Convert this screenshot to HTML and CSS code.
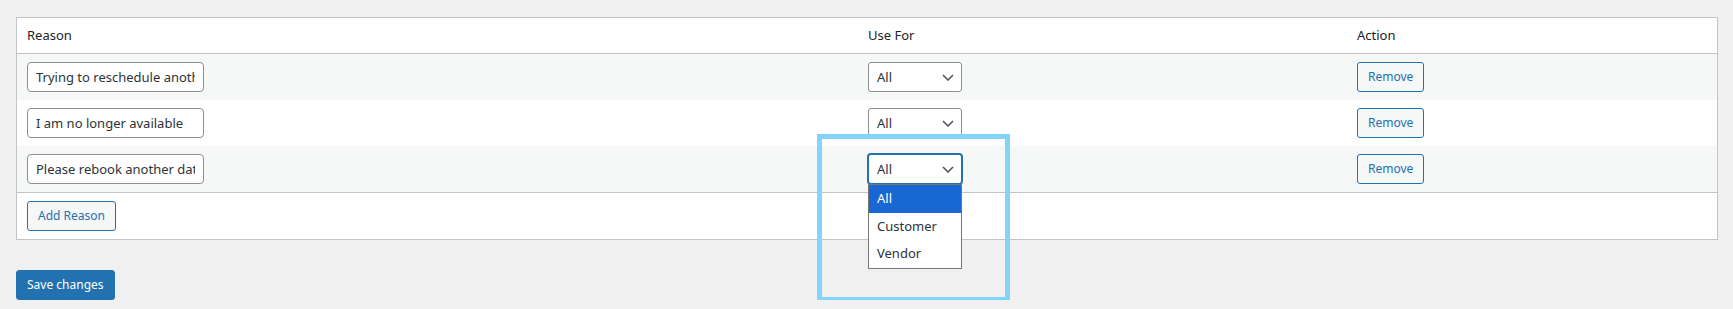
FILE: index.html
```html
<!DOCTYPE html>
<html lang="en">
<head>
    <meta charset="UTF-8">
    <meta name="viewport" content="width=device-width, initial-scale=1.0">
    <title>Cancellation Reasons</title>
    <link rel="stylesheet" href="styles.css">
</head>
<body>
    <table class="reasons-table">
        <colgroup>
            <col class="col-reason">
            <col class="col-use">
            <col>
        </colgroup>
        <thead>
            <tr>
                <th>Reason</th>
                <th>Use For</th>
                <th>Action</th>
            </tr>
        </thead>
        <tbody>
            <tr>
                <td><input type="text" class="reason-input" value="Trying to reschedule another time"></td>
                <td>
                    <div class="select-box">
                        <span>All</span>
                        <svg class="chevron" width="12" height="7" viewBox="0 0 12 7"><path d="M1 1 L6 6 L11 1" fill="none" stroke="#50575e" stroke-width="1.6"/></svg>
                    </div>
                </td>
                <td><button class="btn">Remove</button></td>
            </tr>
            <tr>
                <td><input type="text" class="reason-input" value="I am no longer available"></td>
                <td>
                    <div class="select-box">
                        <span>All</span>
                        <svg class="chevron" width="12" height="7" viewBox="0 0 12 7"><path d="M1 1 L6 6 L11 1" fill="none" stroke="#50575e" stroke-width="1.6"/></svg>
                    </div>
                </td>
                <td><button class="btn">Remove</button></td>
            </tr>
            <tr>
                <td><input type="text" class="reason-input" value="Please rebook another date"></td>
                <td>
                    <div class="select-box focused">
                        <span>All</span>
                        <svg class="chevron" width="12" height="7" viewBox="0 0 12 7"><path d="M1 1 L6 6 L11 1" fill="none" stroke="#50575e" stroke-width="1.6"/></svg>
                        <!-- open option list -->
                        <ul class="option-list">
                            <li class="selected">All</li>
                            <li>Customer</li>
                            <li>Vendor</li>
                        </ul>
                        <div class="highlight-frame"></div>
                    </div>
                </td>
                <td><button class="btn">Remove</button></td>
            </tr>
        </tbody>
        <tfoot>
            <tr>
                <td colspan="3"><button class="btn">Add Reason</button></td>
            </tr>
        </tfoot>
    </table>

    <div class="submit-row">
        <button class="btn btn-primary">Save changes</button>
    </div>
</body>
</html>
```

FILE: styles.css
```css
body, html {
    margin: 0;
    padding: 0;
}

body {
    padding: 17px 15px 0 16px;
    background-color: #f0f0f1;
    font-family: 'Noto Sans', 'Open Sans', sans-serif;
    font-size: 13px;
    color: #1d2327;
}

.reasons-table {
    width: 100%;
    table-layout: fixed;
    border-collapse: separate;
    border-spacing: 0;
    border: 1px solid #c3c4c7;
    background-color: #fff;
}

.col-reason {
    width: 841px;
}

.col-use {
    width: 489px;
}

.reasons-table th {
    text-align: left;
    font-weight: 400;
    font-size: 13px;
    line-height: 19px;
    padding: 8px 10px;
    border-bottom: 1px solid #c3c4c7;
    color: #1d2327;
}

.reasons-table td {
    padding: 8px 10px;
    height: 30px;
    vertical-align: middle;
}

.reasons-table tbody tr:nth-child(odd) {
    background-color: #f6f7f7;
}

.reasons-table tfoot td {
    border-top: 1px solid #c3c4c7;
}

.reason-input {
    display: block;
    box-sizing: border-box;
    width: 177px;
    height: 30px;
    margin: 0;
    padding: 0 8px;
    border: 1px solid #8c8f94;
    border-radius: 4px;
    background: #fff;
    font-family: inherit;
    font-size: 13px;
    color: #2c3338;
    outline: none;
}

.select-box {
    position: relative;
    box-sizing: border-box;
    display: flex;
    align-items: center;
    justify-content: space-between;
    width: 94px;
    height: 30px;
    padding: 0 7px 0 8px;
    border: 1px solid #8c8f94;
    border-radius: 3px;
    background: #fff;
    font-size: 13px;
    color: #2c3338;
}

.select-box.focused {
    border-color: #2271b1;
    box-shadow: 0 0 0 1px #2271b1;
}

.chevron {
    margin-top: 1px;
}

.option-list {
    position: absolute;
    top: 29px;
    left: -1px;
    width: 94px;
    box-sizing: border-box;
    margin: 0;
    padding: 0;
    list-style: none;
    background: #fff;
    border: 1px solid #767676;
    z-index: 2;
}

.option-list li {
    height: 27.5px;
    line-height: 27px;
    padding-left: 8px;
    font-size: 13px;
    color: #2c3338;
}

.option-list li.selected {
    background-color: #1967d2;
    color: #fff;
}

.highlight-frame {
    position: absolute;
    top: -21px;
    left: -52px;
    width: 193px;
    height: 168px;
    box-sizing: border-box;
    border: 5px solid #82d4fc;
    z-index: 3;
    pointer-events: none;
}

.btn {
    display: inline-block;
    box-sizing: border-box;
    height: 30px;
    margin: 0;
    padding: 0 10px;
    border: 1px solid #2271b1;
    border-radius: 3px;
    background-color: #f6f7f7;
    color: #2271b1;
    font-family: inherit;
    font-size: 12px;
    line-height: 28px;
    cursor: pointer;
}

.btn-primary {
    background-color: #2271b1;
    color: #fff;
}

.submit-row {
    padding-top: 30px;
}
```
